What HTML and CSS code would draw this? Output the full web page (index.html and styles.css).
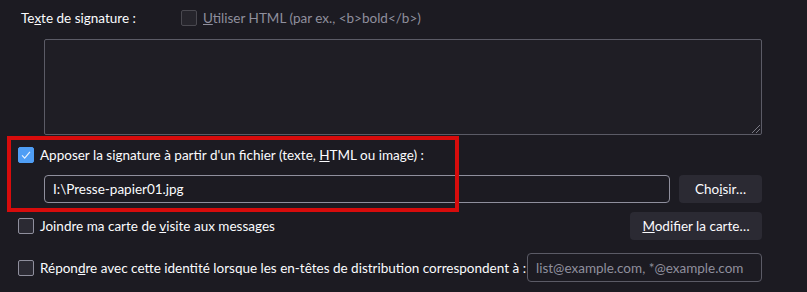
FILE: index.html
```html
<!DOCTYPE html>
<html lang="fr">
<head>
  <meta charset="UTF-8">
  <title>Signature</title>
  <link rel="stylesheet" href="styles.css">
</head>
<body>
  <div class="panel">
    <div class="row sig-head">
      <span class="sig-label">Te<u>x</u>te de signature :</span>
      <label class="check disabled">
        <span class="box"></span>
        <span><u>U</u>tiliser HTML (par ex., &lt;b&gt;bold&lt;/b&gt;)</span>
      </label>
    </div>
    <div class="sig-area">
      <span class="grip"></span>
    </div>
    <label class="check file-check">
      <span class="box checked">
        <svg viewBox="0 0 16 16" width="16" height="16"><path d="M3.5 8.5l3 3 6-7" fill="none" stroke="#e8f1fd" stroke-width="1.4"/></svg>
      </span>
      <span>Apposer la signature à partir d'un fichier (texte, <u>H</u>TML ou image) :</span>
    </label>
    <div class="row file-row">
      <div class="field file-field">I:\Presse-papier01.jpg</div>
      <button class="btn choose">Cho<u>i</u>sir…</button>
    </div>
    <div class="row card-row">
      <label class="check">
        <span class="box"></span>
        <span>Joindre ma carte de <u>v</u>isite aux messages</span>
      </label>
      <button class="btn edit-card"><u>M</u>odifier la carte…</button>
    </div>
    <div class="row reply-row">
      <label class="check">
        <span class="box"></span>
        <span>Répon<u>d</u>re avec cette identité lorsque les en-têtes de distribution correspondent à :</span>
      </label>
      <div class="field reply-field">list@example.com, *@example.com</div>
    </div>
    <div class="highlight"></div>
  </div>
</body>
</html>
```

FILE: styles.css
```css
:root {
  --bg: #1c1b22;
  --text: #fbfbfe;
  --muted: #8f8f9d;
  --border: #8f8f9d;
  --btn: #2b2a33;
  --accent: #4f9ef5;
}
html, body {
  margin: 0;
  padding: 0;
  background: var(--bg);
  color: var(--text);
  font-family: Lato, 'Noto Sans', Arial, sans-serif;
  font-size: 13.5px;
  white-space: nowrap;
}
.panel {
  position: relative;
  padding: 7px 45px 0 18px;
  width: 744px;
}
.row {
  display: flex;
  align-items: center;
}
.check {
  display: flex;
  align-items: center;
  gap: 6px;
}
.box {
  width: 14px;
  height: 14px;
  border: 1px solid #8f8f9d;
  border-radius: 2px;
  background: #2b2a33;
  flex: none;
  display: flex;
  align-items: center;
  justify-content: center;
}
.box.checked {
  background: var(--accent);
  border-color: var(--accent);
}
.check.disabled {
  color: var(--muted);
}
.check.disabled .box {
  border-color: #4a4950;
  background: #26252c;
}
.sig-head {
  height: 22px;
}
.sig-label {
  padding-left: 3px;
  width: 160px;
}
.sig-area {
  position: relative;
  margin: 10px 0 0 26px;
  height: 94px;
  border: 1px solid #5b5b66;
  border-radius: 2px;
  background: #1f1e25;
}
.grip {
  position: absolute;
  right: 1px;
  bottom: 1px;
  width: 10px;
  height: 10px;
  background: repeating-linear-gradient(135deg, transparent 0 2px, #7a7a84 2px 3px);
  clip-path: polygon(100% 0, 100% 100%, 0 100%);
}
.file-check {
  margin-top: 11px;
  height: 18px;
}
.file-row {
  margin-top: 11px;
  gap: 9px;
}
.field {
  height: 26px;
  border: 1px solid var(--border);
  border-radius: 4px;
  background: var(--bg);
  display: flex;
  align-items: center;
  padding: 0 8px;
  box-sizing: border-box;
  flex: none;
}
.file-field {
  margin-left: 26px;
  flex: 1;
  height: 28px;
}
.btn {
  font: inherit;
  color: var(--text);
  background: var(--btn);
  border: none;
  border-radius: 4px;
  height: 28px;
  padding: 0;
}
.choose {
  width: 83px;
}
.card-row {
  margin-top: 9px;
  justify-content: space-between;
}
.edit-card {
  width: 132px;
}
.reply-row {
  margin-top: 13px;
  justify-content: space-between;
}
.reply-field {
  width: 235px;
  height: 29px;
  color: var(--muted);
  border-color: #5b5b66;
}
.highlight {
  position: absolute;
  left: 7px;
  top: 136px;
  width: 444px;
  height: 68px;
  border: 4px solid #d70c0c;
  pointer-events: none;
}
```
